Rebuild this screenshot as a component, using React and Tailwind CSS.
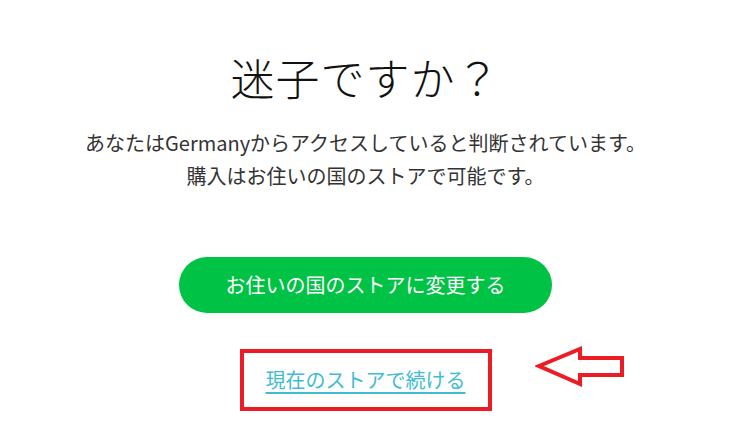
import React from 'react';

const FONT = { fontFamily: '"Noto Sans CJK JP", "Noto Sans", "Liberation Sans", sans-serif' };

const App = () => {
  return (
    <div className="relative w-[731px] h-[444px] bg-white overflow-hidden" style={FONT}>
      <div className="flex flex-col items-center">
        {/* Title */}
        <h1 className="mt-[46px] text-[44px] leading-[62px] font-light text-[#111] tracking-[1px]">
          迷子ですか？
        </h1>

        {/* Message */}
        <div className="mt-[18px] text-center text-[20px] leading-[33px] text-[#333]">
          <p>あなたはGermanyからアクセスしていると判断されています。</p>
          <p>購入はお住いの国のストアで可能です。</p>
        </div>

        {/* Change store */}
        <button className="mt-[65px] w-[373px] h-[56px] rounded-full bg-[#00c244] text-white text-[20px]">
          お住いの国のストアに変更する
        </button>

        {/* Continue link, marked */}
        <div className="mt-[36px] w-[252px] h-[62px] border-4 border-[#ed1c24] flex items-center justify-center">
          <a href="#" className="text-[20px] text-[#40bcd2] underline underline-offset-4 decoration-2">
            現在のストアで続ける
          </a>
        </div>
      </div>

      {/* Annotation arrow */}
      <svg className="absolute left-[535px] top-[346px]" width="92" height="42" viewBox="0 0 92 42">
        <polygon
          points="4,20 45,3 45,12 87,12 87,29 45,29 45,38"
          fill="none"
          stroke="#ed1c24"
          strokeWidth="4"
          strokeLinejoin="miter"
        />
      </svg>
    </div>
  );
};

export default App;
